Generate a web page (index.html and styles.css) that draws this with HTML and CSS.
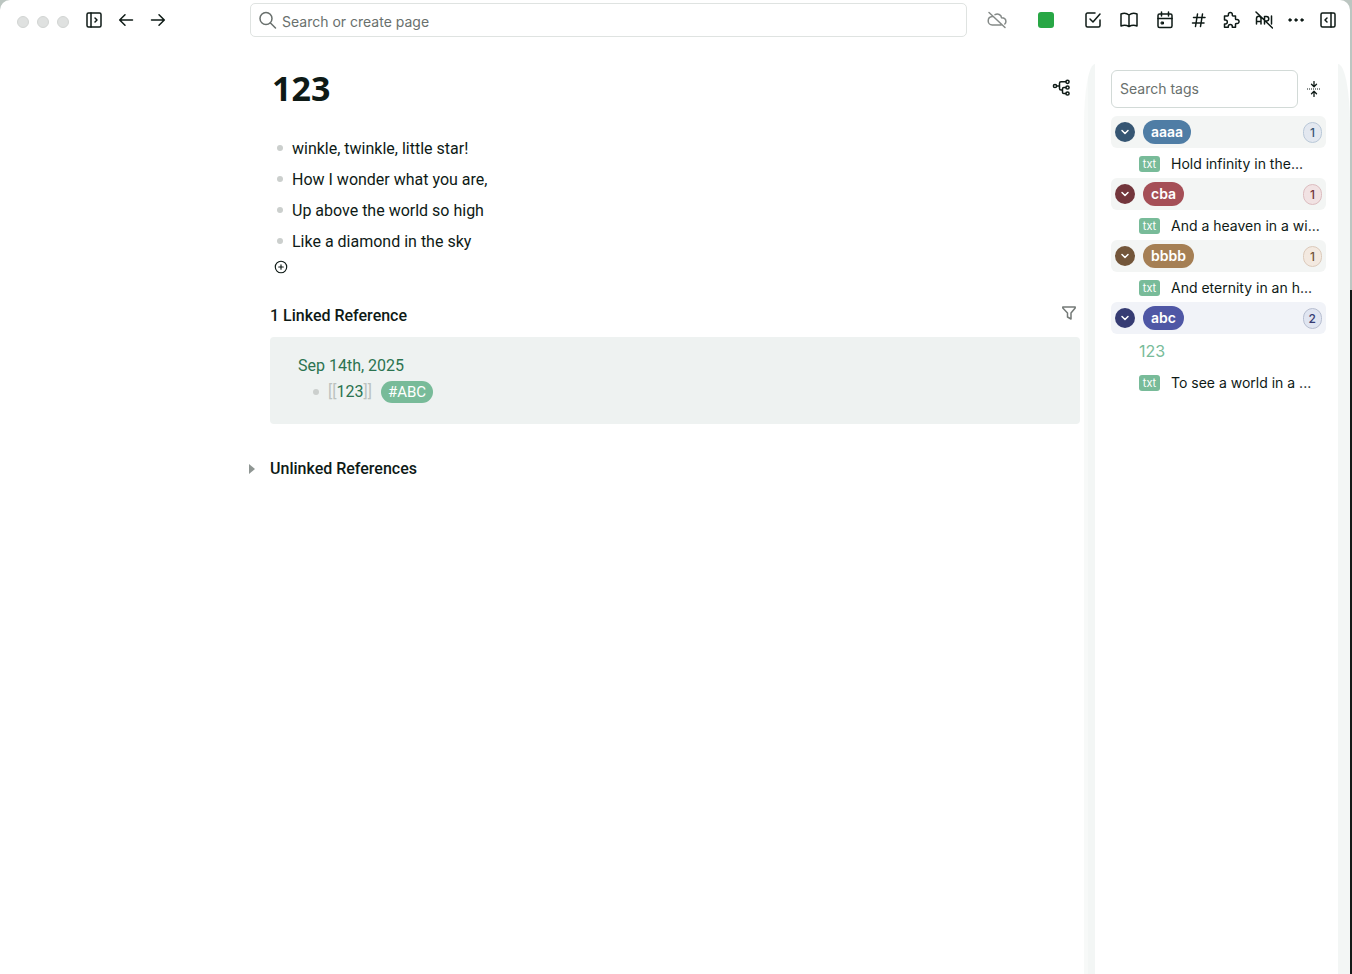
FILE: index.html
```html
<!DOCTYPE html>
<html lang="en">
<head>
<meta charset="utf-8">
<meta name="viewport" content="width=device-width, initial-scale=1">
<title>123</title>
<link rel="stylesheet" href="styles.css">
</head>
<body>
<div class="desktop">
<div class="window">
  <header class="topbar">
    <div class="nav">
      <div class="lights"><span class="light"></span><span class="light"></span><span class="light"></span></div>
      <button class="nav-btn" aria-label="Toggle left sidebar"><svg class="icon" viewBox="0 0 20 20"><rect x="3" y="3" width="14" height="14" rx="1.5"/><path d="M7 3v14M11 8l2 2-2 2"/></svg></button>
      <button class="nav-btn" aria-label="Back"><svg class="icon" viewBox="0 0 20 20"><path d="M16.500 10H4M9 4.700L3.700 10 9 15.300"/></svg></button>
      <button class="nav-btn" aria-label="Forward"><svg class="icon" viewBox="0 0 20 20"><path d="M3.500 10H16M11 4.700l5.300 5.300-5.300 5.300"/></svg></button>
    </div>
    <label class="search">
      <svg class="icon" viewBox="0 0 20 20"><circle cx="8" cy="8.500" r="6"/><path d="M12.500 13L17.500 18"/></svg>
      <input class="search-input" type="text" placeholder="Search or create page" aria-label="Search or create page">
    </label>
    <div class="status">
      <button class="status-btn muted" aria-label="Sync off"><svg class="icon" viewBox="0 0 20 20"><path d="M2 2.500l16 15M5.700 6.600C3 6.700 1.200 8.600 1.200 10.900c0 2.200 1.800 4 4 4h9M8 4.700c2.800-1.600 6.200 0 6.600 3.100 2.600.1 4.300 1.700 4.300 3.700 0 1-.4 1.900-1.100 2.500"/></svg></button>
      <button class="status-btn" aria-label="Status"><span class="square"></span></button>
    </div>
    <div class="tools">
      <button class="tool wide" aria-label="Tasks"><svg class="icon" viewBox="0 0 20 20"><path d="M7 9l3 3 7-8M17 10v5.500a1.500 1.500 0 0 1-1.500 1.500h-11A1.500 1.500 0 0 1 3 15.500v-11A1.500 1.500 0 0 1 4.500 3H12"/></svg></button>
      <button class="tool wide" aria-label="Pages"><svg class="icon" viewBox="0 0 20 20"><path d="M10 5C8 3.400 4.500 3 2 4v12c2.500-1 6-.6 8 .5 2-1.100 5.500-1.500 8-.5V4c-2.500-1-6-.6-8 1zM10 5v11.500"/></svg></button>
      <button class="tool wide" aria-label="Calendar"><svg class="icon" viewBox="0 0 20 20"><rect x="3" y="4" width="14" height="13.500" rx="1.500"/><path d="M3 8.500h14M6.500 2v4M13.500 2v4"/><path class="solid" d="M6.500 12h2v2h-2z"/></svg></button>
      <button class="tool" aria-label="Tags"><svg class="icon" viewBox="0 0 20 20"><path d="M4.500 7.500h11.500M3.500 13h11.500M8.500 4l-2 12.500M13.500 4l-2 12.500"/></svg></button>
      <button class="tool" aria-label="Plugins"><svg class="icon" viewBox="0 0 20 20"><path d="M3.500 6h3c.8 0 1-.5.900-1.300C7 1.700 11.600 1.700 11.300 4.700c-.1.800.2 1.300.9 1.300h2.300v2.700c0 .8.500 1 1.300.9 3-.3 3 4.200 0 3.900-.8-.1-1.300.2-1.300.9v2.800h-3.200v-.8c0-2.700-4-2.700-4 0v.8H3.500v-3.200h.8c2.700 0 2.700-4 0-4h-.8z"/></svg></button>
      <button class="tool" aria-label="API off"><svg class="icon" viewBox="0 0 20 20"><path d="M3.500 14V8.500a2 2 0 0 1 4.500 0V14M3.500 11.500H8M11.500 14V6.500h2a2.200 2.200 0 0 1 0 4.500h-2M18.500 6v8M3 2l16.500 16"/></svg></button>
      <button class="tool" aria-label="More"><svg class="icon" viewBox="0 0 20 20"><circle class="solid" cx="5" cy="10" r="1.200"/><circle class="solid" cx="11" cy="10" r="1.200"/><circle class="solid" cx="17" cy="10" r="1.200"/></svg></button>
      <button class="tool" aria-label="Toggle right sidebar"><svg class="icon" viewBox="0 0 20 20"><rect x="4" y="3" width="14" height="14" rx="1.500"/><path d="M14 3v14M10 8l-2 2 2 2"/></svg></button>
    </div>
  </header>
  <div class="body">
    <main class="page">
      <div class="title-row">
        <h1 class="title">123</h1>
        <button class="plain graph" aria-label="Open mind map"><svg class="icon" viewBox="0 0 20 20"><circle cx="3" cy="8" r="1.600"/><circle cx="15.500" cy="3.800" r="1.600"/><circle cx="15.500" cy="9.500" r="1.600"/><circle cx="15.500" cy="15.500" r="1.600"/><path d="M4.800 8H7.500M13.800 3.800H9Q7.500 3.800 7.500 5.300v5.200Q7.500 12 9 12h1.500M13.800 9.500h-2q-1.300 0-1.300 1.300v3.400q0 1.300 1.300 1.300h2"/></svg></button>
      </div>
      <ul class="blocks">
        <li class="block">winkle, twinkle, little star!</li>
        <li class="block">How I wonder what you are,</li>
        <li class="block">Up above the world so high</li>
        <li class="block">Like a diamond in the sky</li>
      </ul>
      <button class="plain add" aria-label="Add block"><svg class="icon" viewBox="0 0 14 14"><circle cx="7" cy="7" r="5"/><path d="M7 5v4M5 7h4"/></svg></button>
      <section class="linked">
        <div class="section-head">
          <h2 class="heading">1 Linked Reference</h2>
          <button class="plain filter" aria-label="Filter"><svg class="icon" viewBox="0 0 16 16"><path d="M1.800 2h12.400v1L10 8v6l-3.500-2V8L1.800 3z"/></svg></button>
        </div>
        <div class="reference">
          <a class="date" href="#">Sep 14th, 2025</a>
          <div class="ref-block"><span><span class="bracket">[[</span><a class="page-link" href="#">123</a><span class="bracket">]]</span></span><a class="hashtag" href="#">#ABC</a></div>
        </div>
      </section>
      <section class="unlinked">
        <button class="plain caret" aria-label="Expand unlinked references"><svg viewBox="0 0 6 10" class="triangle"><path d="M0 0l6 5-6 5z"/></svg></button>
        <h2 class="heading">Unlinked References</h2>
      </section>
    </main>
    <aside class="sidebar">
      <div class="panel">
        <div class="tag-search">
          <input class="tag-input" type="text" placeholder="Search tags" aria-label="Search tags">
          <button class="plain collapse" aria-label="Collapse all"><svg class="icon" viewBox="0 0 16 16"><path d="M8 0.500v5M5.500 3.200L8 5.700l2.500-2.500M8 15.500v-5M5.500 12.800L8 10.300l2.500 2.500"/><path class="dotted" d="M1 8h14"/></svg></button>
        </div>
        <section class="group blue">
          <div class="group-head"><button class="toggle" aria-label="Collapse aaaa"><svg class="icon" viewBox="0 0 10 10"><path d="M2 3.500l3 3 3-3"/></svg></button><a class="tag" href="#">aaaa</a><span class="count">1</span></div>
          <a class="item" href="#"><span class="type">txt</span><span class="item-text">Hold infinity in the...</span></a>
        </section>
        <section class="group red">
          <div class="group-head"><button class="toggle" aria-label="Collapse cba"><svg class="icon" viewBox="0 0 10 10"><path d="M2 3.500l3 3 3-3"/></svg></button><a class="tag" href="#">cba</a><span class="count">1</span></div>
          <a class="item" href="#"><span class="type">txt</span><span class="item-text">And a heaven in a wi...</span></a>
        </section>
        <section class="group brown">
          <div class="group-head"><button class="toggle" aria-label="Collapse bbbb"><svg class="icon" viewBox="0 0 10 10"><path d="M2 3.500l3 3 3-3"/></svg></button><a class="tag" href="#">bbbb</a><span class="count">1</span></div>
          <a class="item" href="#"><span class="type">txt</span><span class="item-text">And eternity in an h...</span></a>
        </section>
        <section class="group indigo">
          <div class="group-head"><button class="toggle" aria-label="Collapse abc"><svg class="icon" viewBox="0 0 10 10"><path d="M2 3.500l3 3 3-3"/></svg></button><a class="tag" href="#">abc</a><span class="count">2</span></div>
          <a class="item page-item" href="#">123</a>
          <a class="item" href="#"><span class="type">txt</span><span class="item-text">To see a world in a ...</span></a>
        </section>
      </div>
    </aside>
  </div>
</div>
</div>
</body>
</html>
```
FILE: styles.css
```css
* { box-sizing: border-box; }
body { margin: 0; font-family: Roboto, "Liberation Sans", sans-serif; font-size: 16px; color: #0e1a16; }
h1, h2, ul { margin: 0; padding: 0; }
a { color: inherit; text-decoration: none; }
button { border: 0; padding: 0; background: none; color: inherit; font: inherit; display: flex; align-items: center; justify-content: center; }
input { font: inherit; color: inherit; }
.icon { display: block; width: 20px; height: 20px; fill: none; stroke: currentColor; stroke-width: 1.5; stroke-linecap: round; stroke-linejoin: round; }
.solid { fill: currentColor; stroke-width: 1; }

.desktop { min-height: 100vh; display: flex; padding-right: 2px; background: linear-gradient(#bcc6c1 0, #bcc6c1 290px, #141a18 290px); }
.window { flex: 1; min-width: 0; display: flex; flex-direction: column; background: #fff; border-radius: 10px 10px 0 0; }

.topbar { display: flex; align-items: center; height: 40px; padding-right: 7px; }
.nav { width: 250px; display: flex; align-items: center; padding-left: 17px; }
.lights { display: flex; gap: 8px; margin: 4px 9px 0 0; }
.light { width: 12px; height: 12px; border-radius: 50%; background: #dfe1e0; border: 1px solid #d2d5d3; }
.nav-btn { width: 32px; height: 32px; }
.search { flex: 1; min-width: 0; height: 34px; display: flex; align-items: center; gap: 4px; padding: 0 7px; border: 1px solid #dfe3e1; border-radius: 5px; color: #69706d; }
.search-input { flex: 1; min-width: 0; border: 0; outline: 0; padding: 2px 0 0; background: none; font-family: Inter, "Liberation Sans", sans-serif; font-size: 14px; }
.search-input::placeholder, .tag-input::placeholder { color: #69706d; opacity: 1; }
.status { display: flex; gap: 29px; padding: 0 19px 0 20px; }
.status-btn { width: 20px; height: 20px; }
.muted { color: #858a88; }
.square { width: 16px; height: 16px; border-radius: 3px; background: #28a745; }
.tools { display: flex; }
.tool { width: 32px; height: 32px; }
.wide { width: 36px; }

.body { flex: 1; display: flex; }
.page { flex: 1; min-width: 0; padding: 24px 4px 0 270px; }
.title-row { display: flex; align-items: center; justify-content: space-between; height: 48px; padding: 0 8px 0 2px; }
.title { font-family: "Noto Sans", sans-serif; font-size: 34px; line-height: 48px; font-weight: 700; }
.blocks { list-style: none; padding-top: 20px; }
.block, .ref-block { display: flex; align-items: center; }
.block { height: 31px; padding: 1px 0 0 7px; gap: 9px; }
.block::before, .ref-block::before { content: ""; width: 6px; height: 6px; border-radius: 50%; background: #cbcfcd; }
.add { margin: 3px 0 0 3px; }
.add .icon { width: 16px; height: 16px; stroke-width: 1; }
.linked { padding-top: 24px; }
.section-head { display: flex; justify-content: space-between; height: 32px; padding: 0 3px 0 0; }
.heading { font-size: 16px; line-height: 24px; font-weight: 500; }
.section-head .heading { line-height: 34px; }
.filter { height: 28px; color: #747a77; }
.filter .icon { width: 16px; height: 16px; }
.reference { margin-top: 6px; padding: 16px 28px 20px; background: #eef2f1; border-radius: 4px; color: #2b7350; }
.date { display: block; line-height: 26px; }
.ref-block { height: 25px; padding-left: 15px; gap: 9px; }
.bracket { color: #bcc2bf; }
.hashtag { padding: 0 7px; line-height: 22px; border-radius: 11px; background: #78bb99; color: #fff; font-size: 15px; }
.unlinked { display: flex; align-items: center; margin: 33px 0 0 -21px; gap: 15px; }
.caret { height: 24px; }
.triangle { width: 6px; height: 10px; fill: #8f9693; }

.sidebar { width: 266px; margin-top: 24px; padding: 0 12px 0 11px; display: flex; background: linear-gradient(90deg, #f7f9f8 4px, #f3f6f5 4px); border-radius: 11px 12px 0 0 / 60px 60px 0 0; font-family: Inter, "Liberation Sans", sans-serif; font-size: 14px; }
.panel { flex: 1; min-width: 0; background: #fff; padding: 6px 12px 0 16px; }
.tag-search { display: flex; align-items: center; gap: 8px; margin-bottom: 8px; }
.tag-input { flex: 1; min-width: 0; height: 38px; padding: 0 8px 1px; border: 1px solid #d2dad7; border-radius: 6px; outline: 0; background: #fff; }
.collapse { margin-right: 4px; }
.collapse .icon { width: 16px; height: 16px; stroke-width: 1.3; }
.collapse .dotted { stroke-width: 1; stroke-dasharray: 1 1; stroke-linecap: butt; }
.group-head { display: flex; align-items: center; gap: 8px; height: 32px; padding: 0 4px; border-radius: 6px; background: #f3f5f4; }
.toggle { width: 20px; height: 20px; border-radius: 50%; background: var(--dark); color: #fff; }
.toggle .icon { width: 10px; height: 10px; }
.tag { padding: 0 8px; line-height: 24px; border-radius: 12px; background: var(--main); color: #fff; font-weight: 600; }
.count { margin-left: auto; min-width: 19px; padding: 0 5px; line-height: 19px; border: 1px solid var(--line); border-radius: 11px; background: var(--pale); color: var(--dark); font-size: 12px; font-weight: 500; text-align: center; }
.item { display: flex; align-items: center; gap: 11px; height: 30px; padding: 1px 0 0 28px; }
.item-text { white-space: nowrap; }
.type { width: 21px; line-height: 16px; border-radius: 3px; background: #78bb99; color: #fff; font-size: 11px; text-align: center; }
.page-item { height: 33px; color: #78bb99; font-size: 16px; }
.blue { --main: #4f7da5; --dark: #365673; --line: #b9c8d8; --pale: #e3e8f0; }
.red { --main: #a54f57; --dark: #73363c; --line: #dcbcbf; --pale: #f1e2e3; }
.brown { --main: #a57f54; --dark: #73563a; --line: #dccabb; --pale: #f3e9e0; }
.indigo { --main: #4f57a5; --dark: #363c73; --line: #b7bed0; --pale: #e0e5f1; }
.indigo .group-head { background: #f1f3f8; }
```
